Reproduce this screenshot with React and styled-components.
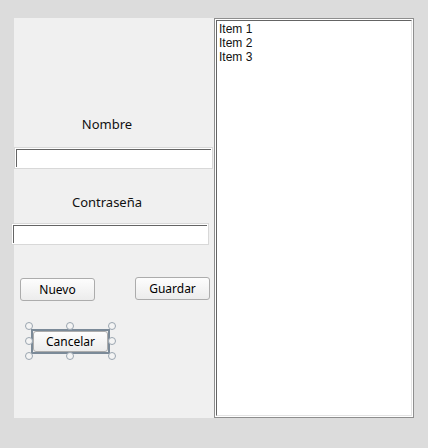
import React from "react";
import styled, { createGlobalStyle } from "styled-components";

const GlobalStyle = createGlobalStyle`
  html, body {
    margin: 0;
    padding: 0;
    background: #dcdcdc;
  }
  body {
    font-family: "Noto Sans", "Open Sans", sans-serif;
    font-size: 12px;
    color: #000;
  }
`;

const Workspace = styled.div`
  display: flex;
  align-items: flex-start;
  padding: 18px 0 0 14px;
  width: 428px;
  height: 448px;
  box-sizing: border-box;
`;

const FormPanel = styled.div`
  width: 200px;
  height: 400px;
  background: #f0f0f0;
  display: flex;
  flex-direction: column;
  align-items: flex-start;
  padding-top: 98px;
  box-sizing: border-box;
`;

const Label = styled.div`
  width: 186px;
  height: 16px;
  line-height: 16px;
  margin-top: ${(p) => p.$top || 0}px;
  font-size: 13px;
  text-align: center;
  color: #111;
`;

const TextBox = styled.div`
  width: ${(p) => p.$width}px;
  height: 22px;
  margin-top: ${(p) => p.$top}px;
  margin-left: ${(p) => p.$left || 0}px;
  border: 1px solid #d8d8d8;
  padding: 1px;
  background: #fff;
  box-sizing: border-box;
  flex-shrink: 0;
`;

const TextBoxInner = styled.div`
  height: 100%;
  border-top: 1px solid #646464;
  border-left: 1px solid #646464;
  box-sizing: border-box;
`;

const ButtonRow = styled.div`
  display: flex;
  align-items: flex-start;
  gap: 40px;
  margin: 32px 0 0 6px;
`;

const Button = styled.div`
  width: 75px;
  height: ${(p) => p.$height || 23}px;
  margin-top: ${(p) => p.$top || 0}px;
  border: 1px solid #acacac;
  border-radius: 3px;
  background: linear-gradient(#fdfdfd, #ececec);
  box-sizing: border-box;
  display: flex;
  align-items: center;
  justify-content: center;
  font-size: 12px;
  color: #000;
`;

const Selection = styled.div`
  position: relative;
  margin: 28px 0 0 17px;
  border: 2px solid #7b8a98;
`;

const Handle = styled.span`
  position: absolute;
  width: 6px;
  height: 6px;
  border: 1px solid #9aa5b0;
  border-radius: 50%;
  background: #f4f4f4;
  left: ${(p) => p.$x}px;
  top: ${(p) => p.$y}px;
`;

const ListBox = styled.div`
  width: 200px;
  height: 400px;
  border: 1px solid #8e8e8e;
  padding: 1px;
  background: #fff;
  box-sizing: border-box;
`;

const ListInner = styled.div`
  height: 100%;
  border-top: 1px solid #646464;
  border-left: 1px solid #646464;
  border-right: 1px solid #e3e3e3;
  border-bottom: 1px solid #e3e3e3;
  box-sizing: border-box;
  padding: 1px 0 0 2px;
`;

const ListItem = styled.div`
  height: 14px;
  line-height: 14px;
  font-family: "Liberation Sans", Arial, sans-serif;
  font-size: 12px;
  color: #111;
`;

// designer grab handles: corners and edge midpoints of the selected control
const handles = [
  [-8, -9], [33, -9], [75, -9],
  [-8, 6], [75, 6],
  [-8, 21], [33, 21], [75, 21],
];

export default function App() {
  return (
    <>
      <GlobalStyle />
      <Workspace>
        <FormPanel>
          <Label>Nombre</Label>
          <TextBox $width={199} $top={15}>
            <TextBoxInner />
          </TextBox>
          <Label $top={25}>Contraseña</Label>
          <TextBox $width={198} $top={13} $left={-3}>
            <TextBoxInner />
          </TextBox>
          <ButtonRow>
            <Button $top={1}>Nuevo</Button>
            <Button>Guardar</Button>
          </ButtonRow>
          <Selection>
            <Button $height={21}>Cancelar</Button>
            {handles.map(([x, y], i) => (
              <Handle key={i} $x={x} $y={y} />
            ))}
          </Selection>
        </FormPanel>
        <ListBox>
          <ListInner>
            <ListItem>Item 1</ListItem>
            <ListItem>Item 2</ListItem>
            <ListItem>Item 3</ListItem>
          </ListInner>
        </ListBox>
      </Workspace>
    </>
  );
}
